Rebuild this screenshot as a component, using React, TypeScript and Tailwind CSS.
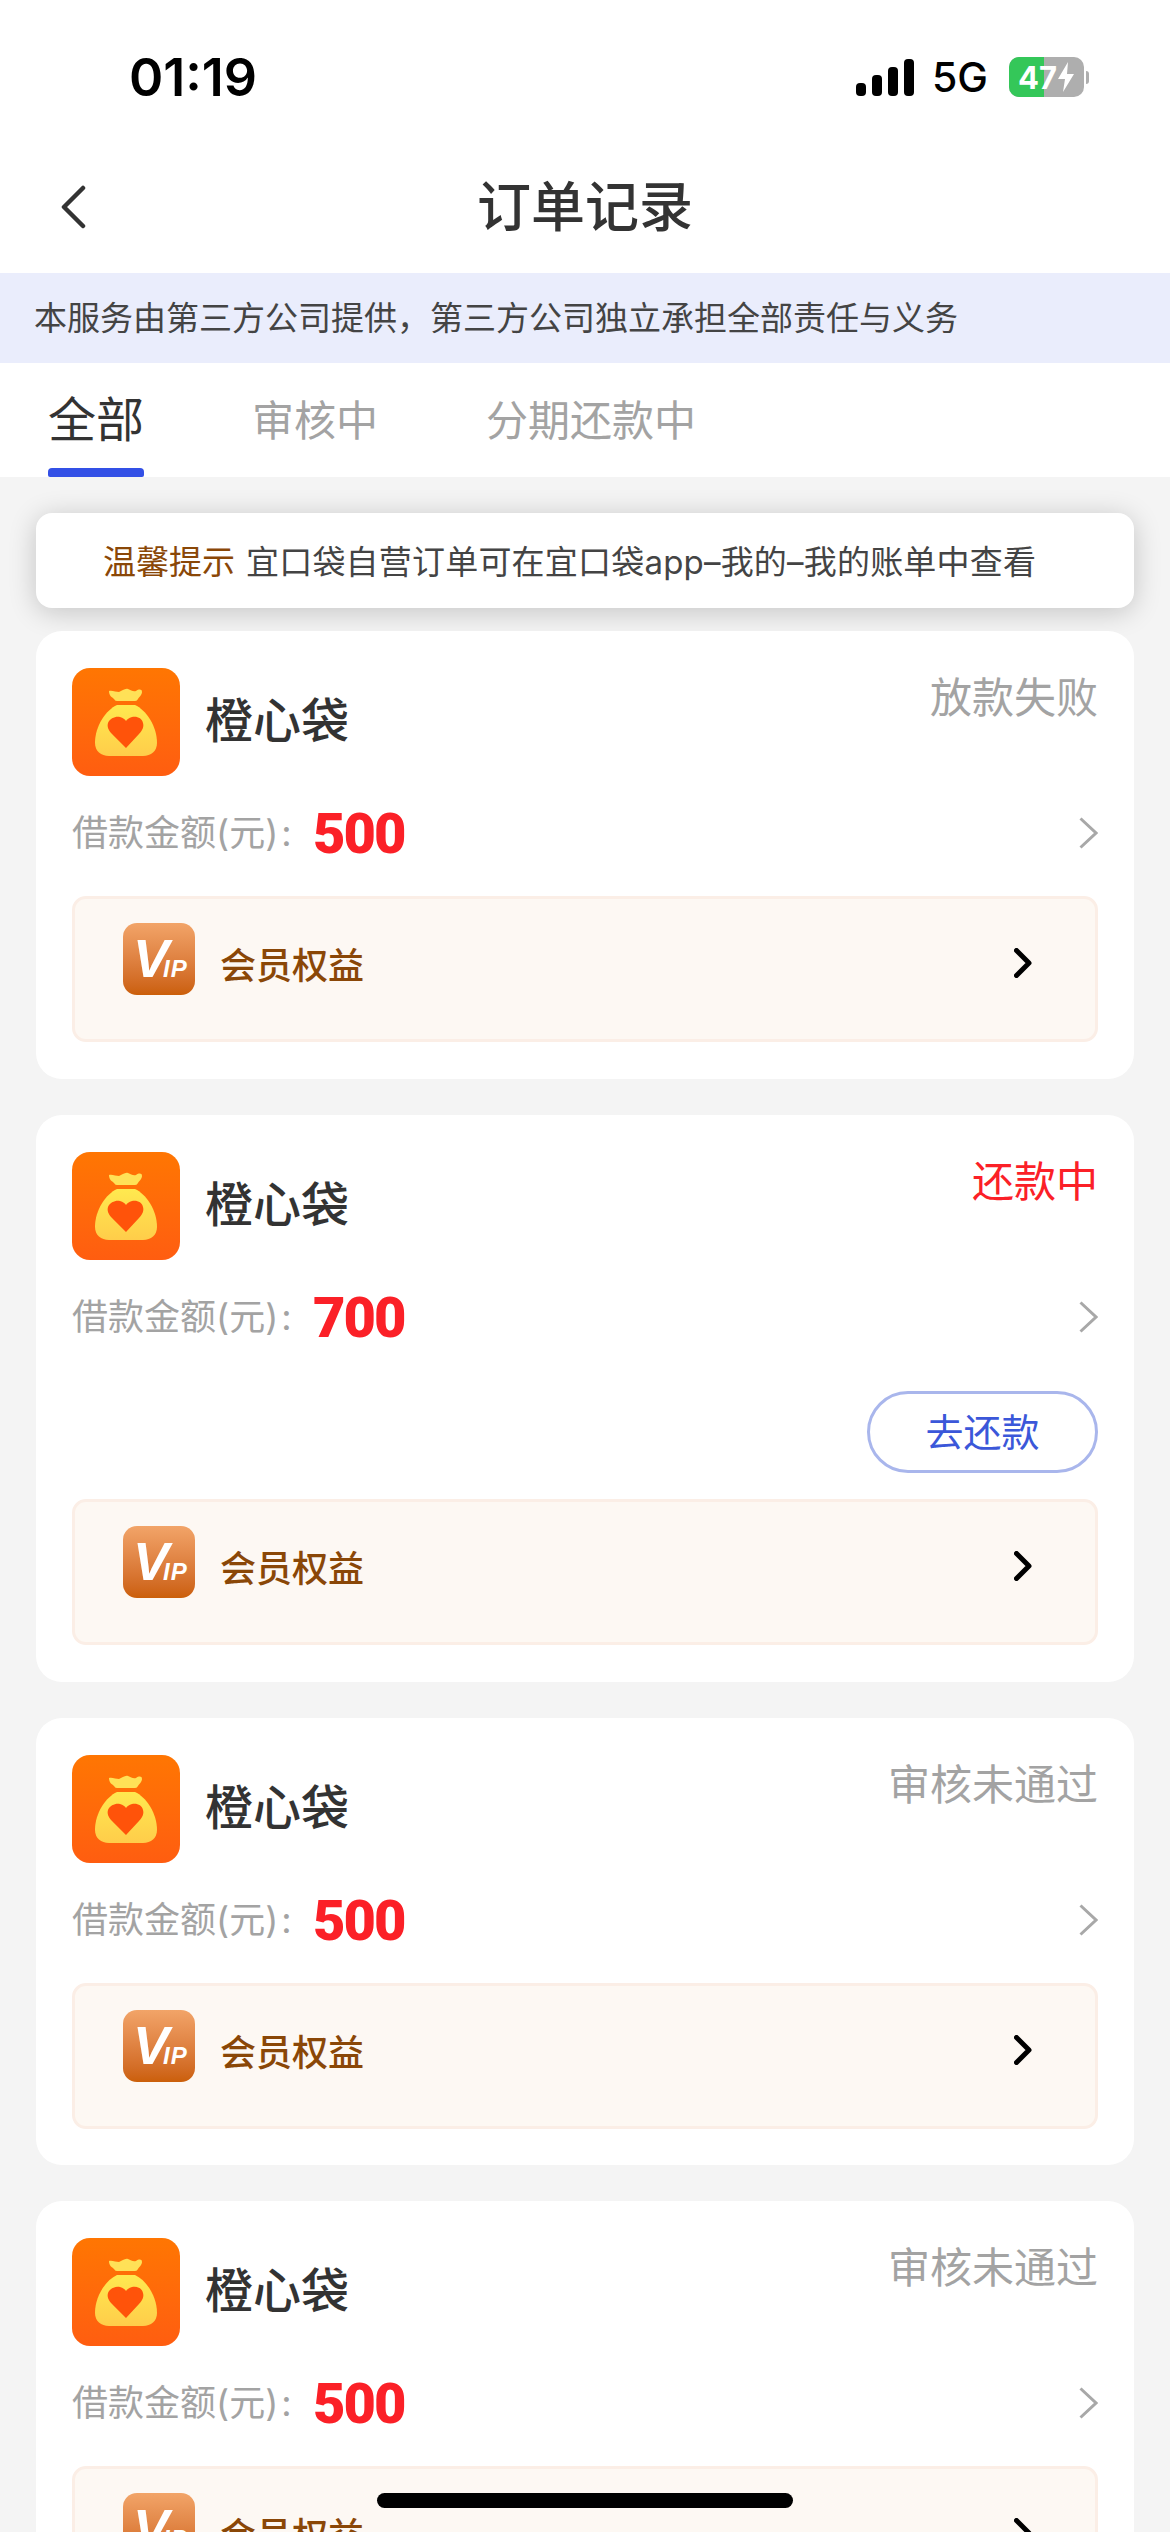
const cjk = "font-['Inter','Noto_Sans_CJK_SC',sans-serif]";

function Signal() {
  return (
    <svg width="58" height="37" viewBox="0 0 58 37" className="block">
      <rect x="0" y="24" width="10" height="13" rx="4" fill="#000" />
      <rect x="16" y="16" width="10" height="21" rx="4" fill="#000" />
      <rect x="32" y="8" width="10" height="29" rx="4" fill="#000" />
      <rect x="48" y="0" width="10" height="37" rx="4" fill="#000" />
    </svg>
  );
}

function Battery() {
  return (
    <div className="flex items-center">
      <div className="relative flex h-[40px] w-[75px] items-center justify-center overflow-hidden rounded-[10px] bg-[#aeaeae]">
        <div className="absolute inset-y-0 left-0 w-[35px] bg-[#34c759]" />
        <span className="relative font-['Inter',sans-serif] text-[31px] leading-none font-bold text-white">47</span>
        <svg width="18" height="32" viewBox="0 0 18 32" className="relative">
          <path d="M11 1 1 18h7l-2 13 11-18h-7z" fill="#fff" />
        </svg>
      </div>
      <div className="ml-[2px] h-[13px] w-[3px] rounded-r-full bg-[#aeaeae]" />
    </div>
  );
}

function BagIcon() {
  return (
    <div className="flex h-[108px] w-[108px] shrink-0 items-center justify-center rounded-[18px] bg-gradient-to-b from-[#ff7602] to-[#ff5d10]">
      <svg width="108" height="108" viewBox="0 0 108 108" className="block">
        <defs>
          <linearGradient id="bagFill" x1="0" y1="0" x2="0" y2="1">
            <stop offset="0" stopColor="#ffe94f" />
            <stop offset="1" stopColor="#ffcd4a" />
          </linearGradient>
        </defs>
        <path d="M37 23c3-1 7 1 10 1 3-1 6-4 9-3 3 1 5 3 8 2 3-2 6-2 6 1 0 3-3 5-4 7-1 1-1 2-3 2H45c-2 0-2-1-3-2-2-2-5-3-5-8z" fill="#ffe157" />
        <path d="M45 37h18c11 5 22 21 22 38 0 8-6 13-14 13H37c-8 0-14-5-14-13 0-17 11-33 22-38z" fill="url(#bagFill)" />
        <path d="M54 80 40 66c-4-4-5-8-4-11 2-5 8-7 12-6 3 1 5 2 6 4 1-2 3-3 6-4 5-1 10 1 11 6 1 3 0 7-4 11z" fill="#ff530a" />
      </svg>
    </div>
  );
}

function VipIcon() {
  return (
    <div className="h-[72px] w-[72px] shrink-0 overflow-hidden rounded-[14px] bg-gradient-to-b from-[#f2a468] to-[#cb5f08] pl-[10px] font-['Liberation_Sans',sans-serif] font-bold text-white italic">
      <span className="text-[54px] leading-[70px] tracking-[-6px]">V</span>
      <span className="text-[24px] leading-[70px] tracking-[1px]">IP</span>
    </div>
  );
}

function ChevronGray() {
  return (
    <svg width="19" height="32" viewBox="0 0 19 32" className="block">
      <path d="M1.500 1.500 17 16 1.500 30.500" fill="none" stroke="#a8a8a8" strokeWidth="3" />
    </svg>
  );
}

function OrderCard({ amount, status, statusClass, repay, tight }: { amount: string; status: string; statusClass: string; repay?: boolean; tight?: boolean }) {
  return (
    <div className={`rounded-[26px] bg-white px-[36px] pt-[37px] ${tight ? 'pb-[36px]' : 'pb-[37px]'}`}>
      <div className="flex h-[108px] items-start">
        <BagIcon />
        <div className="mt-[20px] ml-[25px] flex-1 text-[48px] leading-[66px] font-medium text-[#333]">橙心袋</div>
        <div className={`mt-[1px] text-[42px] leading-[58px] ${statusClass}`}>{status}</div>
      </div>
      <div className="mt-[27px] flex h-[60px] items-center">
        <span className="w-[241px] text-[36px] leading-[50px] text-[#a3a3a3]">借款金额(元)<span className="ml-[3px]">:</span></span>
        <span className="mt-[2px] flex-1 font-['Roboto',sans-serif] text-[56px] leading-[60px] font-black tracking-[-2px] text-[#fb2027]">{amount}</span>
        <ChevronGray />
      </div>
      {repay && (
        <div className="mt-[44px] flex justify-end">
          <div className="flex h-[82px] w-[231px] items-center justify-center rounded-full border-[3px] border-[#a9b6ec] text-[38px] leading-none text-[#3b57d9]">
            去还款
          </div>
        </div>
      )}
      <div className={`${repay ? 'mt-[26px]' : 'mt-[33px]'} flex h-[146px] rounded-[14px] border-[3px] border-[#fbeee6] bg-[#fdf8f3] pt-[24px] pr-[63px] pl-[48px]`}>
        <VipIcon />
        <div className="mt-[18px] ml-[25px] flex-1 text-[36px] leading-[50px] font-medium text-[#8a4707]">会员权益</div>
        <svg width="18" height="30" viewBox="0 0 18 30" className="mt-[25px] block">
          <path d="M2.500 2.500 15 15 2.500 27.500" fill="none" stroke="#000" strokeWidth="5" strokeLinecap="round" strokeLinejoin="round" />
        </svg>
      </div>
    </div>
  );
}

export default function App() {
  return (
    <div className={`relative h-[2532px] w-[1170px] overflow-hidden bg-[#f4f4f4] ${cjk}`}>
      {/* Status bar */}
      <div className="flex h-[150px] items-start bg-white pt-[48px] pr-[81px] pl-[129px]">
        <span className="flex-1 font-['Inter',sans-serif] text-[52px] leading-[60px] font-semibold text-black">01:19</span>
        <div className="mt-[9px] flex items-center">
          <Signal />
          <span className="mr-[21px] ml-[18px] font-['Inter',sans-serif] text-[41px] leading-[40px] font-medium text-black">5G</span>
          <Battery />
        </div>
      </div>

      {/* Nav bar */}
      <div className="relative flex h-[123px] items-center justify-center bg-white pb-[8px]">
        <svg width="26" height="44" viewBox="0 0 26 44" className="absolute top-[35px] left-[60px] block">
          <path d="M23 3 4 22l19 19" fill="none" stroke="#333" strokeWidth="4.500" strokeLinecap="round" strokeLinejoin="round" />
        </svg>
        <h1 className="text-[54px] leading-[76px] font-medium text-[#333]">订单记录</h1>
      </div>

      {/* Notice banner */}
      <div className="flex h-[90px] items-center bg-[#eaedfc] pl-[34px] text-[33px] leading-[46px] text-[#444]">
        {'本服务由第三方公司提供\uFF0C第三方公司独立承担全部责任与义务'}
      </div>

      {/* Tabs */}
      <div className="flex h-[114px] items-start gap-[108px] bg-white pl-[48px]">
        <div className="relative h-[114px]">
          <span className="mt-[24px] block text-[48px] leading-[66px] text-[#333]">全部</span>
          <div className="absolute bottom-0 left-0 h-[9px] w-[96px] rounded-t-[4px] rounded-b-[2px] bg-[#3350e6]" />
        </div>
        <span className="mt-[29px] text-[42px] leading-[58px] text-[#a3a3a3]">审核中</span>
        <span className="mt-[29px] text-[42px] leading-[58px] text-[#a3a3a3]">分期还款中</span>
      </div>

      {/* List */}
      <div className="flex flex-col px-[36px] pt-[36px]">
        <div className="flex h-[95px] items-center rounded-[16px] bg-white pt-[2px] pl-[67px] shadow-[0_4px_28px_rgba(0,0,0,0.2)]">
          <span className="text-[33px] leading-[46px] text-[#8a4707]">温馨提示</span>
          <span className="ml-[11px] text-[33px] leading-[46px] tracking-[0.2px] text-[#444]">宜口袋自营订单可在宜口袋app–我的–我的账单中查看</span>
        </div>
        <div className="relative mt-[23px] flex flex-col gap-[36px]">
          <OrderCard amount="500" status="放款失败" statusClass="text-[#a3a3a3]" />
          <OrderCard amount="700" status="还款中" statusClass="text-[#fb2027]" repay />
          <OrderCard amount="500" status="审核未通过" statusClass="text-[#a3a3a3]" tight />
          <OrderCard amount="500" status="审核未通过" statusClass="text-[#a3a3a3]" />
        </div>
      </div>

      {/* Home indicator */}
      <div className="absolute top-[2493px] left-[377px] h-[15px] w-[416px] rounded-full bg-black" />
    </div>
  );
}
